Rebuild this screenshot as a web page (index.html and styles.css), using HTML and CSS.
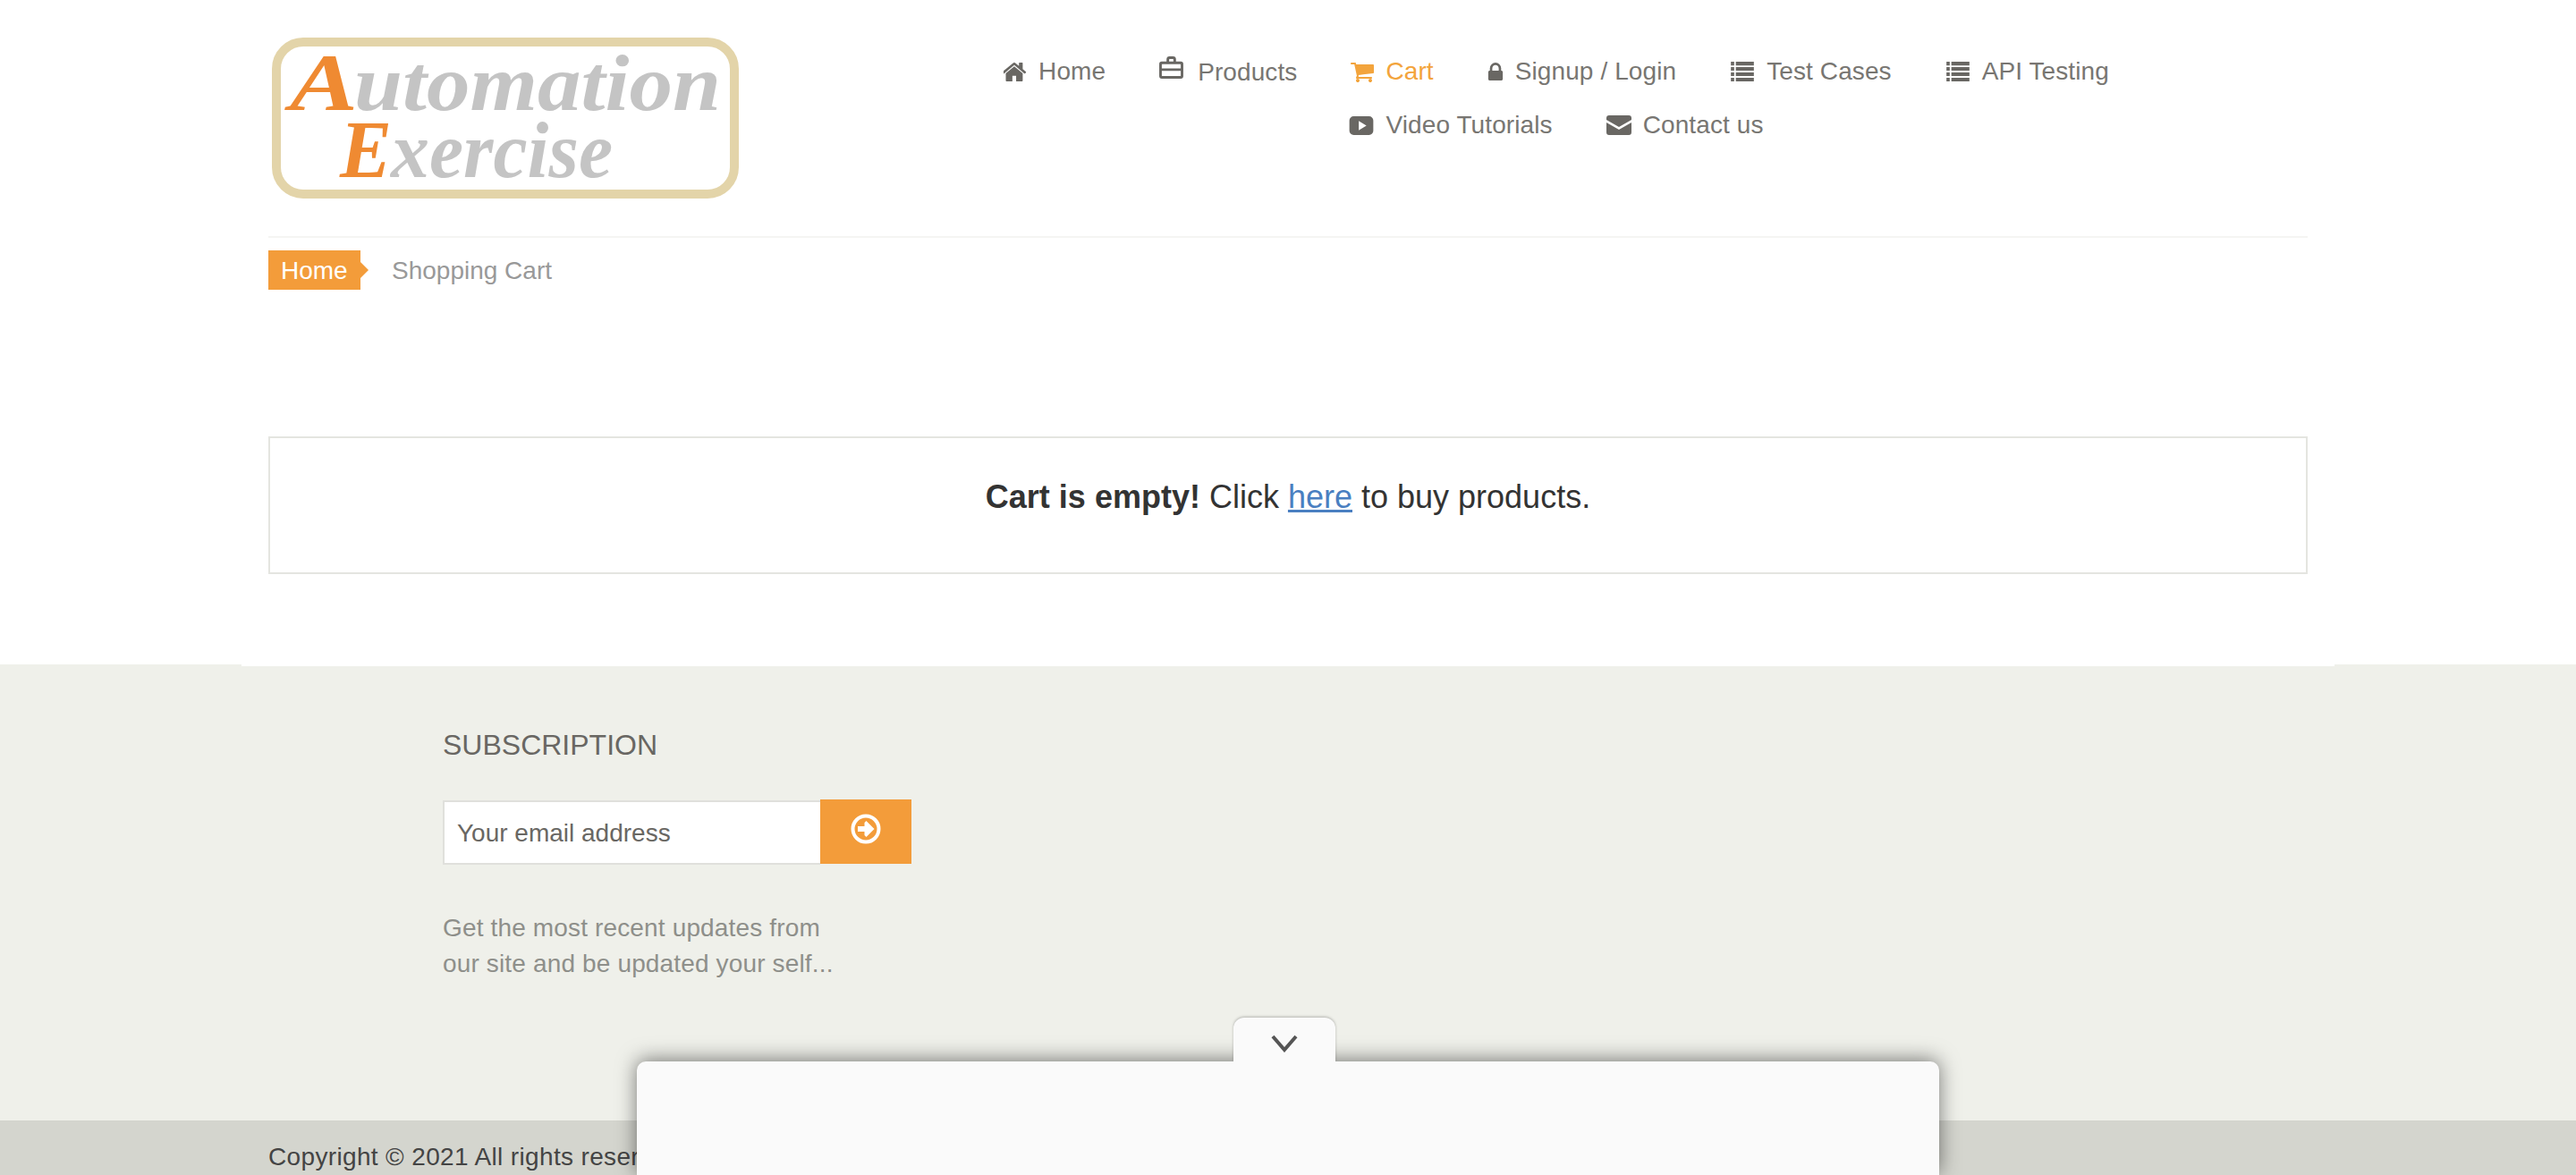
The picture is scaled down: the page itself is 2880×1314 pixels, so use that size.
FILE: index.html
```html
<!DOCTYPE html>
<html lang="en">
<head>
<meta charset="utf-8">
<title>Automation Exercise - Checkout</title>
<link rel="stylesheet" href="styles.css">
</head>
<body>
<header class="site-header">
  <a class="logo" href="#">
    <svg class="logo-art" viewBox="0 0 522 180" role="img" aria-label="Automation Exercise">
      <rect class="logo-frame" x="5" y="5" width="512" height="170" rx="30"/>
      <text class="logo-cap" x="20" y="81" textLength="76" lengthAdjust="spacingAndGlyphs">A</text>
      <text class="logo-word" x="92" y="81" textLength="410" lengthAdjust="spacingAndGlyphs">utomation</text>
      <text class="logo-cap" x="76" y="156" textLength="58" lengthAdjust="spacingAndGlyphs">E</text>
      <text class="logo-word" x="133" y="156" textLength="248" lengthAdjust="spacingAndGlyphs">xercise</text>
    </svg>
  </a>
  <nav class="main-nav">
    <a class="nav-link" href="#"><svg class="icon icon-home" viewBox="128 256 1536 1280"><path d="M1408 992v480q0 26-19 45t-45 19h-384v-384h-256v384h-384q-26 0-45-19t-19-45v-480q0-1 .5-3t.5-3l575-474 575 474q1 2 1 6zm223-69l-62 74q-8 9-21 11h-3q-13 0-21-7l-692-577-692 577q-12 8-24 7-13-2-21-11l-62-74q-8-10-7-23.500t11-21.500l719-599q32-26 76-26t76 26l244 204v-195q0-14 9-23t23-9h192q14 0 23 9t9 23v408l219 182q10 8 11 21.500t-7 23.500z"/></svg>Home</a>
    <a class="nav-link nav-link-products" href="#"><svg class="icon icon-case" viewBox="0 0 28 26"><path fill-rule="evenodd" d="M8.500 6V3.500A3.500 3.500 0 0 1 12 0h4a3.500 3.500 0 0 1 3.500 3.500V6H25a3 3 0 0 1 3 3v14a3 3 0 0 1-3 3H3a3 3 0 0 1-3-3V9a3 3 0 0 1 3-3zm3 0h5V3.700a.7.7 0 0 0-.7-.7h-3.600a.7.7 0 0 0-.7.7zM3 9.500V14h22V9.500a.5.500 0 0 0-.5-.5h-21a.5.500 0 0 0-.5.500zM3 17v5.500c0 .3.200.5.500.5h21c.3 0 .5-.2.500-.5V17z"/></svg>Products</a>
    <a class="nav-link nav-link-active" href="#"><svg class="icon icon-cart" viewBox="64 256 1664 1408"><path d="M704 1536q0 52-38 90t-90 38-90-38-38-90 38-90 90-38 90 38 38 90zm896 0q0 52-38 90t-90 38-90-38-38-90 38-90 90-38 90 38 38 90zm128-1088v512q0 24-16.500 42.500t-40.500 21.500l-1044 122q13 60 13 70 0 16-24 64h920q26 0 45 19t19 45-19 45-45 19h-1024q-26 0-45-19t-19-45q0-11 8-31.500t16-36 21.500-40 15.500-29.500l-177-823h-204q-26 0-45-19t-19-45 19-45 45-19h256q16 0 28.500 6.500t19.500 15.500 13 24.500 8 26 5.500 29.500 4.500 26h1201q26 0 45 19t19 45z"/></svg>Cart</a>
    <a class="nav-link" href="#"><svg class="icon icon-lock" viewBox="256 128 1280 1408"><path d="M640 768h512v-192q0-106-75-181t-181-75-181 75-75 181v192zm832 96v576q0 40-28 68t-68 28h-960q-40 0-68-28t-28-68v-576q0-40 28-68t68-28h32v-192q0-184 132-316t316-132 316 132 132 316v192h32q40 0 68 28t28 68z"/></svg>Signup / Login</a>
    <a class="nav-link" href="#"><svg class="icon icon-list" viewBox="0 0 28 24"><path d="M0 0h4v4.500H0zM6 0h22v4.500H6zM0 6.500h4V11H0zM6 6.500h22V11H6zM0 13h4v4.500H0zM6 13h22v4.500H6zM0 19.500h4V24H0zM6 19.500h22V24H6z"/></svg>Test Cases</a>
    <a class="nav-link" href="#"><svg class="icon icon-list" viewBox="0 0 28 24"><path d="M0 0h4v4.500H0zM6 0h22v4.500H6zM0 6.500h4V11H0zM6 6.500h22V11H6zM0 13h4v4.500H0zM6 13h22v4.500H6zM0 19.500h4V24H0zM6 19.500h22V24H6z"/></svg>API Testing</a>
    <a class="nav-link" href="#"><svg class="icon icon-video" viewBox="0 0 28 22"><path fill-rule="evenodd" d="M5 0h18a5 5 0 0 1 5 5v12a5 5 0 0 1-5 5H5a5 5 0 0 1-5-5V5a5 5 0 0 1 5-5zm6 5.500v11l9-5.500z"/></svg>Video Tutorials</a>
    <a class="nav-link" href="#"><svg class="icon icon-mail" viewBox="0 0 28 22"><path d="M3 0h22a3 3 0 0 1 3 3v2L14 13 0 5V3a3 3 0 0 1 3-3zM0 8l14 8 14-8v11a3 3 0 0 1-3 3H3a3 3 0 0 1-3-3z"/></svg>Contact us</a>
  </nav>
</header>

<main class="page">
  <ol class="breadcrumb">
    <li><a class="crumb-home" href="#">Home</a></li>
    <li class="crumb-current">Shopping Cart</li>
  </ol>
  <section class="cart-empty">
    <p><b>Cart is empty!</b> Click <a href="#">here</a> to buy products.</p>
  </section>
</main>

<footer class="site-footer">
  <div class="footer-main">
    <h2 class="footer-title">SUBSCRIPTION</h2>
    <form class="subscribe">
      <input class="subscribe-input" type="email" placeholder="Your email address">
      <button class="subscribe-button" type="button" aria-label="Subscribe">
        <svg class="subscribe-icon" viewBox="0 0 34 34"><circle cx="17" cy="17" r="14.500" fill="none" stroke="#fff" stroke-width="4"/><path fill="#fff" d="M17.500 8l9 9-9 9-2-2v-4H8v-6h7.500v-4z"/></svg>
      </button>
    </form>
    <p class="footer-text">Get the most recent updates from<br>our site and be updated your self...</p>
  </div>
  <div class="footer-bottom">
    <p class="copyright">Copyright © 2021 All rights reserved</p>
  </div>
</footer>

<aside class="ad-anchor">
  <button class="ad-tab" type="button" aria-label="Collapse">
    <svg class="ad-chevron" viewBox="0 0 30 20"><path d="M2 2l13 15L28 2" fill="none" stroke="#555" stroke-width="4"/></svg>
  </button>
</aside>
</body>
</html>
```
FILE: styles.css
```css
* { box-sizing: border-box; }
html, body { margin: 0; height: 100%; }
body {
  overflow: hidden;
  background: #fff;
  color: #696763;
  font-family: "Liberation Sans", Arial, sans-serif;
  font-size: 28px;
}
a { text-decoration: none; color: inherit; }
p { margin: 0; }

.site-header {
  width: 2280px;
  height: 266px;
  margin: 0 auto;
  display: flex;
  border-bottom: 2px solid #f5f5f3;
}
.logo {
  flex: none;
  width: 522px;
  height: 180px;
  margin: 42px 0 0 4px;
}
.logo-art { display: block; width: 522px; height: 180px; }
.logo-frame { fill: #fff; stroke: #e3d4a9; stroke-width: 10; }
.logo-word, .logo-cap {
  font-family: "Liberation Serif", serif;
  font-style: italic;
  font-weight: 700;
}
.logo-word { fill: #c4c4c4; font-size: 88px; }
.logo-cap { fill: #ef8a32; font-size: 92px; }

.main-nav {
  flex: 1;
  display: flex;
  flex-wrap: wrap;
  justify-content: center;
  align-content: flex-start;
  column-gap: 60px;
  padding: 50px 104px 0 178px;
}
.nav-link {
  display: flex;
  align-items: center;
  height: 60px;
  gap: 13px;
  color: #787672;
  letter-spacing: 0.1px;
  white-space: nowrap;
}
.nav-link-products { padding-top: 2px; gap: 16px; }
.nav-link-active { color: #f3a43c; }
.icon { height: 20px; fill: #696763; flex: none; }
.nav-link-active .icon { fill: #f3a43c; }
.icon-home { width: 26px; height: 21px; }
.icon-case { width: 27px; height: 25px; margin-top: -11px; }
.icon-cart { width: 26px; height: 22px; margin-top: 2px; }
.icon-lock { width: 18px; height: 20px; }
.icon-list { width: 28px; height: 22px; }
.icon-video { width: 28px; height: 21px; }
.icon-mail { width: 28px; height: 22px; }

.page { width: 2280px; margin: 0 auto; }
.breadcrumb {
  display: flex;
  align-items: center;
  gap: 33px;
  margin: 14px 0 0;
  padding: 0;
  list-style: none;
  height: 44px;
}
.crumb-home {
  position: relative;
  display: block;
  width: 103px;
  padding: 1px 14px 0;
  line-height: 43px;
  background: #f39c3a;
  color: #fff;
}
.crumb-home::after {
  content: "";
  position: absolute;
  left: 100%;
  top: 13px;
  border: 9px solid transparent;
  border-right: 0;
  border-left-color: #f39c3a;
}
.crumb-current { color: #999; margin-left: 2px; padding-top: 2px; }

.cart-empty {
  height: 154px;
  margin-top: 164px;
  border: 2px solid #e4e5e0;
  color: #333;
  font-size: 36px;
  text-align: center;
  padding-top: 45px;
  line-height: 42px;
}
.cart-empty a { color: #4a7fc1; text-decoration: underline; }

.site-footer { margin-top: 101px; }
.footer-main {
  height: 510px;
  background: #eff0ea;
}
.footer-main::before {
  content: "";
  display: block;
  width: 2340px;
  height: 2px;
  margin: 0 auto;
  background: #fff;
}
.footer-title {
  margin: 70px 0 43px 495px;
  font-size: 32px;
  font-weight: 400;
  line-height: 36px;
  color: #696763;
}
.subscribe { display: flex; align-items: flex-start; margin-left: 495px; }
.subscribe-input {
  width: 422px;
  height: 72px;
  margin-top: 1px;
  padding: 2px 14px 0;
  border: 2px solid #e0e0dc;
  border-right: 0;
  background: #fff;
  font: inherit;
  color: #696763;
  outline: 0;
}
.subscribe-input::placeholder { color: #696763; opacity: 1; }
.subscribe-button {
  display: flex;
  align-items: center;
  justify-content: center;
  width: 102px;
  height: 72px;
  padding: 0 0 6px;
  border: 0;
  background: #f39c3a;
}
.subscribe-icon { width: 34px; height: 34px; }
.footer-text {
  margin: 51px 0 0 495px;
  line-height: 40px;
  letter-spacing: 0.15px;
  color: #8e8f8a;
}
.footer-bottom {
  height: 61px;
  background: #d4d5ce;
  padding: 23px 0 0 300px;
}
.copyright { color: #444; line-height: 36px; letter-spacing: 0.35px; }

.ad-anchor {
  position: fixed;
  left: 712px;
  right: 712px;
  bottom: 0;
  height: 127px;
  background: #fafafa;
  border-radius: 10px 10px 0 0;
  box-shadow: 0 -2px 22px rgba(0, 0, 0, 0.5);
}
.ad-tab {
  position: absolute;
  left: 667px;
  bottom: 100%;
  width: 114px;
  height: 49px;
  padding: 9px 0 0;
  border: 0;
  background: #fafafa;
  border-radius: 12px 12px 0 0;
  box-shadow: 0 -1px 3px rgba(0, 0, 0, 0.25);
  clip-path: inset(-6px -6px 0 -6px);
}
.ad-chevron { display: block; width: 30px; height: 20px; margin: 0 auto; }
```
